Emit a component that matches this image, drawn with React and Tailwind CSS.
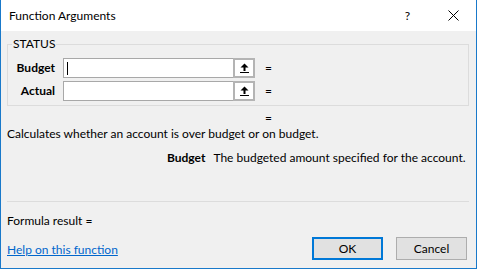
import React from "react";

const ArgRow = ({ label, caret }) => (
    <div className="flex items-center h-[20px]">
        <div className="w-[47px] text-right font-bold">{label}</div>
        <div className="ml-[8px] flex h-[20px]">
            <div className="w-[170px] h-[20px] bg-white border border-[#a8a8a8] border-r-0 flex items-center">
                {caret && <div className="ml-[3px] w-[1px] h-[13px] bg-black" />}
            </div>
            <div className="w-[22px] h-[20px] bg-white border-2 border-[#b4b4b4] flex items-center justify-center">
                <svg width="9" height="11" viewBox="0 0 9 11">
                    <polygon points="4.5,0.5 0.5,4.5 8.5,4.5" fill="#000" />
                    <rect x="3.5" y="4" width="2" height="4" fill="#000" />
                    <rect x="0" y="9" width="9" height="1" fill="#000" />
                </svg>
            </div>
        </div>
        <div className="ml-[10px]">=</div>
    </div>
);

const App = () => {
    return (
        <div
            className="w-[477px] h-[269px] flex flex-col border-x border-b border-[#1979ca] bg-[#f0f0f0] text-[12px] leading-4 text-black overflow-hidden whitespace-nowrap"
            style={{ fontFamily: 'Lato, "Noto Sans", sans-serif' }}
        >
            {/* title bar */}
            <div className="h-[31px] bg-white flex items-center pl-[8px] shrink-0">
                <span>Function Arguments</span>
                <span className="ml-auto">?</span>
                <svg className="ml-[38px] mr-[17px]" width="11" height="11" viewBox="0 0 11 11">
                    <path d="M0.5 0.5 L10.5 10.5 M10.5 0.5 L0.5 10.5" stroke="#000" strokeWidth="1" />
                </svg>
            </div>

            <div className="px-[6px] flex flex-col">
                {/* STATUS group */}
                <div className="relative mt-[13px] w-[462px] h-[62px] border border-[#dcdcdc] pt-[13px] flex flex-col gap-[3px]">
                    <span className="absolute left-[4px] top-[-9px] px-[1px] bg-[#f0f0f0]">STATUS</span>
                    <ArgRow label="Budget" caret />
                    <ArgRow label="Actual" />
                </div>

                <div className="mt-[4px] pl-[258px]">=</div>
                <div>Calculates whether an account is over budget or on budget.</div>

                <div className="mt-[8px] pl-[160px] flex">
                    <span className="font-bold">Budget</span>
                    <span className="ml-[8px]">The budgeted amount specified for the account.</span>
                </div>

                <div className="mt-[35px] w-[462px] h-[1px] bg-[#dcdcdc]" />

                <div className="mt-[11px]">Formula result =</div>

                <div className="mt-[8px] flex items-start">
                    <a href="#" className="mt-[5px] text-[#0066cc] underline">Help on this function</a>
                    <div className="ml-auto mr-[3px] flex gap-[13px]">
                        <button className="w-[71px] h-[23px] bg-[#e1e1e1] border-2 border-[#0078d7]">OK</button>
                        <button className="w-[71px] h-[23px] bg-[#e1e1e1] border border-[#adadad]">Cancel</button>
                    </div>
                </div>
            </div>
        </div>
    );
};

export default App;
